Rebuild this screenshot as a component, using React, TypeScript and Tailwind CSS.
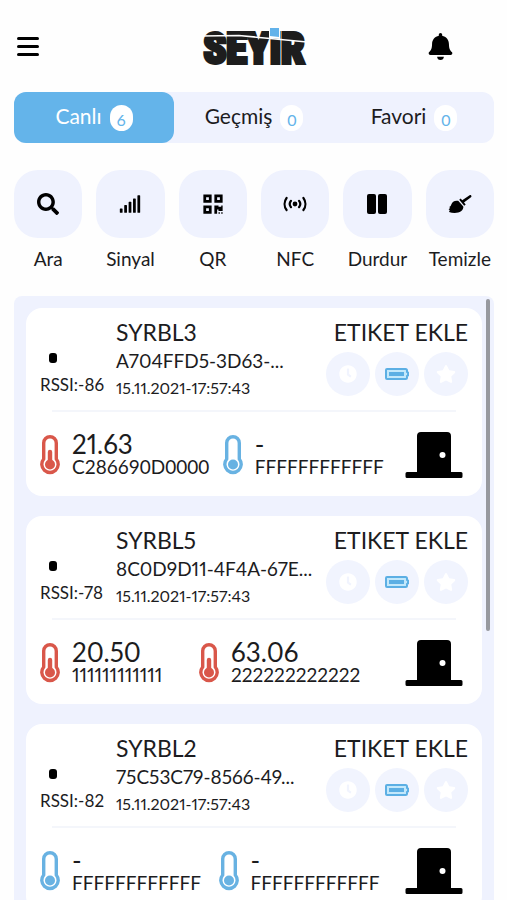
import type { ReactNode } from 'react';
import { FaBell, FaClock, FaQrcode, FaSearch, FaSignal, FaStar } from 'react-icons/fa';

interface Sensor {
  value: string;
  id: string;
  active: boolean;
}

interface Device {
  name: string;
  uuid: string;
  rssi: number;
  date: string;
  sensors: Sensor[];
}

const devices: Device[] = [
  {
    name: 'SYRBL3',
    uuid: 'A704FFD5-3D63-...',
    rssi: -86,
    date: '15.11.2021-17:57:43',
    sensors: [
      { value: '21.63', id: 'C286690D0000', active: true },
      { value: '-', id: 'FFFFFFFFFFFF', active: false },
    ],
  },
  {
    name: 'SYRBL5',
    uuid: '8C0D9D11-4F4A-67E...',
    rssi: -78,
    date: '15.11.2021-17:57:43',
    sensors: [
      { value: '20.50', id: '111111111111', active: true },
      { value: '63.06', id: '222222222222', active: true },
    ],
  },
  {
    name: 'SYRBL2',
    uuid: '75C53C79-8566-49...',
    rssi: -82,
    date: '15.11.2021-17:57:43',
    sensors: [
      { value: '-', id: 'FFFFFFFFFFFF', active: false },
      { value: '-', id: 'FFFFFFFFFFFF', active: false },
    ],
  },
];

const tabs = [
  { label: 'Canlı', count: 6 },
  { label: 'Geçmiş', count: 0 },
  { label: 'Favori', count: 0 },
];

const NfcIcon = () => (
  <svg viewBox="0 0 24 16" className="w-6 h-4" fill="none" stroke="currentColor" strokeWidth="2.2" strokeLinecap="round">
    <circle cx="12" cy="8" r="1.3" fill="currentColor" />
    <path d="M8 4.8a5 5 0 0 0 0 6.4M16 4.8a5 5 0 0 1 0 6.4M3.6 2a10 10 0 0 0 0 12M20.4 2a10 10 0 0 1 0 12" />
  </svg>
);

const PauseIcon = () => (
  <svg viewBox="0 0 22 22" className="size-[22px]" fill="currentColor">
    <rect x="1" y="1" width="9" height="20" rx="2" />
    <rect x="12" y="1" width="9" height="20" rx="2" />
  </svg>
);

const BrushIcon = () => (
  <svg viewBox="0 0 24 20" className="w-6 h-5" fill="currentColor">
    <path d="M21.6 1.2 14.2 6.3l-1.5-1.8-1.5 1.2 5 6 1.5-1.2-1.7-2L23 3.2c1.2-1-.1-2.8-1.4-2Z" />
    <path d="M10.2 6.8C6.6 6.2 4.2 7.6 3.3 10.4c-.4 1.3-1.3 2.2-2.3 2.6l1.2.8L.6 15.4l1.2.6-.8 2c4.2 1.4 9.4 1.2 12-.8 1.7-1.4 2.6-3.2 2.3-4.8Z" />
  </svg>
);

const actions: { label: string; icon: ReactNode }[] = [
  { label: 'Ara', icon: <FaSearch className="size-[22px]" /> },
  { label: 'Sinyal', icon: <FaSignal className="size-[22px]" /> },
  { label: 'QR', icon: <FaQrcode className="size-[22px]" /> },
  { label: 'NFC', icon: <NfcIcon /> },
  { label: 'Durdur', icon: <PauseIcon /> },
  { label: 'Temizle', icon: <BrushIcon /> },
];

const Logo = () => (
  <svg viewBox="0 0 110 60" className="w-[110px] h-[60px]" role="img" aria-label="SEYİR">
    <text
      x="55"
      y="47"
      textAnchor="middle"
      fontSize="42"
      fontWeight="700"
      fill="#1d1d1d"
      stroke="#1d1d1d"
      strokeWidth="4"
      className="font-['Liberation_Sans_Narrow','Roboto_Condensed','Liberation_Sans',sans-serif]"
    >
      SEYIR
    </text>
    <path d="M70 10h11v13l-11-1Z" fill="#fefefe" />
    <path d="M71 12h9v9l-9-1Z" fill="#62b2ea" />
    <path d="M2 20 40 19.500 108 26" fill="none" stroke="#fefefe" strokeWidth="1.5" />
  </svg>
);

const Thermometer = ({ active }: { active: boolean }) => (
  <svg
    viewBox="0 0 20 40"
    className={`w-5 h-10 shrink-0 ${active ? 'text-[#d9574a]' : 'text-[#68b2e2]'}`}
    fill="none"
    stroke="currentColor"
  >
    <path d="M3.7 24V8a6.3 6.3 0 0 1 12.6 0v16a8.2 8.2 0 1 1-12.6 0Z" strokeWidth="3.4" />
    {active && <path d="M10 17v12" strokeWidth="4.4" strokeLinecap="round" />}
    <circle cx="10" cy="29.5" r="5" fill="currentColor" stroke="none" />
  </svg>
);

const Battery = () => (
  <svg viewBox="0 0 26 14" className="w-[26px] h-[14px]" fill="none">
    <path
      d="M3 2h18.5A1.5 1.5 0 0 1 23 3.5V5l1 .5v3L23 9v1.5a1.5 1.5 0 0 1-1.5 1.5H3a1 1 0 0 1-1-1V3a1 1 0 0 1 1-1Z"
      fill="#c3e8fb"
      stroke="#5cafe4"
      strokeWidth="2"
    />
    <rect x="5" y="5" width="15" height="4" fill="#5cafe4" />
  </svg>
);

const Door = () => (
  <svg viewBox="0 0 58 46" className="w-[58px] h-[46px] ml-2 shrink-0" role="img" aria-label="Kapı">
    <path
      d="M12 41V4a4 4 0 0 1 4-4h26a4 4 0 0 1 4 4v36h10a1.5 1.5 0 0 1 1.5 1.5v3A1.5 1.5 0 0 1 56 46H2a1.5 1.5 0 0 1-1.5-1.5v-3A1.5 1.5 0 0 1 2 40h10Z"
      fill="#000"
    />
    <circle cx="37.5" cy="23" r="3" fill="#fff" />
  </svg>
);

const DeviceCard = ({ device }: { device: Device }) => (
  <article className="bg-white rounded-2xl px-3 pt-[11px] pb-[18px]">
    <div className="flex h-[91px]">
      <div className="w-[78px] shrink-0 flex flex-col pt-[34px]">
        <span className="w-2 h-[10px] rounded-[3px] bg-black ml-[11px]" />
        <p className="text-[17px] leading-5 mt-3 ml-[2px] whitespace-nowrap">RSSI:{device.rssi}</p>
      </div>
      <div className="flex-1 whitespace-nowrap">
        <h2 className="text-[23px] leading-[27px]">{device.name}</h2>
        <p className="text-[19px] leading-[30px]">{device.uuid}</p>
        <p className="text-base leading-6">{device.date}</p>
      </div>
      <div className="shrink-0 flex flex-col items-end pr-[2px]">
        <button className="text-[23px] leading-[27px]">ETIKET EKLE</button>
        <div className="flex gap-[5px] mt-[6px]">
          <button aria-label="Geçmiş" className="size-11 rounded-full bg-[#f1f4fe] text-white flex items-center justify-center">
            <FaClock className="size-[18px]" />
          </button>
          <button aria-label="Pil" className="size-11 rounded-full bg-[#f1f4fe] flex items-center justify-center">
            <Battery />
          </button>
          <button aria-label="Favori" className="size-11 rounded-full bg-[#f1f4fe] text-white flex items-center justify-center">
            <FaStar className="size-5" />
          </button>
        </div>
      </div>
    </div>
    <hr className="border-0 h-[2px] bg-[#f4f6fb] mx-[14px]" />
    <div className="flex items-end justify-between mt-5 pl-[2px] pr-[7px]">
      {device.sensors.map((sensor, i) => (
        <div key={i} className="flex items-center gap-3 h-[46px]">
          <Thermometer active={sensor.active} />
          <div className="whitespace-nowrap">
            <p className="text-[26px] leading-6">{sensor.value}</p>
            <p className={`text-[19px] leading-[22px] ${/[A-F]/.test(sensor.id) ? 'tabular-nums' : ''}`}>
              {sensor.id}
            </p>
          </div>
        </div>
      ))}
      <Door />
    </div>
  </article>
);

const App = () => {
  return (
    <div className="h-screen flex flex-col bg-[#fefefe] text-[#1c1c1e] pl-[14px] pr-[13px] font-['Lato',sans-serif] proportional-nums">
      <header className="grid grid-cols-[1fr_auto_1fr] items-center h-[92px] shrink-0">
        <button aria-label="Menü" className="w-[22px] ml-[3px] flex flex-col gap-[5px]">
          <span className="w-full h-[3px] rounded-full bg-black" />
          <span className="w-full h-[3px] rounded-full bg-black" />
          <span className="w-full h-[3px] rounded-full bg-black" />
        </button>
        <Logo />
        <button aria-label="Bildirimler" className="justify-self-end mr-10 text-black">
          <FaBell className="size-[27px]" />
        </button>
      </header>

      <nav className="grid grid-cols-3 h-[51px] shrink-0 rounded-xl bg-[#eff2fe]">
        {tabs.map((tab, i) => (
          <button
            key={tab.label}
            className={`flex items-center justify-center gap-2 rounded-xl text-[21px] ${
              i === 0 ? 'bg-[#64b4ea] text-white' : ''
            }`}
          >
            <span className="leading-6 pb-1">{tab.label}</span>
            <span className="w-[23px] h-[26px] rounded-full bg-white text-[#64b4ea] text-base leading-[30px] tabular-nums">
              {tab.count}
            </span>
          </button>
        ))}
      </nav>

      <div className="grid grid-cols-6 gap-[14px] mt-[27px] shrink-0">
        {actions.map((action) => (
          <button key={action.label} className="flex flex-col items-center gap-[9px]">
            <span className="w-full h-[68px] rounded-3xl bg-[#eff2fe] text-black flex items-center justify-center">
              {action.icon}
            </span>
            <span className="text-[19px] leading-6">{action.label}</span>
          </button>
        ))}
      </div>

      <main className="relative flex-1 min-h-0 mt-[25px] rounded-t-lg bg-[#eff2fe]">
        <div className="h-full overflow-y-auto [scrollbar-width:none] p-3 space-y-5">
          {devices.map((device) => (
            <DeviceCard key={device.name} device={device} />
          ))}
        </div>
        <div className="absolute top-[3px] right-1 w-1 h-[55%] rounded-full bg-[#97999f]" />
      </main>
    </div>
  );
};

export default App;
